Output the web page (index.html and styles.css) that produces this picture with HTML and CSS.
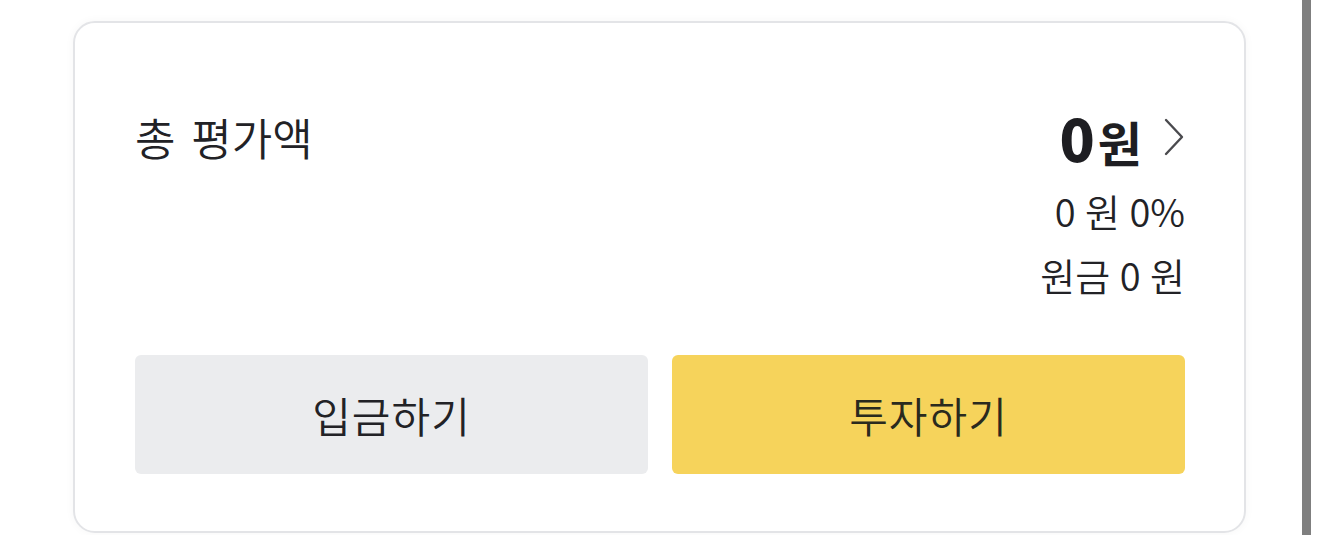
FILE: index.html
```html
<!DOCTYPE html>
<html>
<head>
    <title>총 평가액</title>
    <link rel="stylesheet" href="styles.css">
</head>
<body>
    <div class="page">
        <div class="asset-card">
            <div class="summary">
                <div class="summary-title">총 평가액</div>
                <div class="summary-values">
                    <a class="total" href="#">
                        <span class="total-amount"><b>0</b>원</span>
                        <svg class="chevron" width="22" height="40" viewBox="0 0 22 40">
                            <path d="M3 3 L19 20 L3 37" fill="none" stroke="#4a4a4e" stroke-width="2.4" stroke-linecap="round" stroke-linejoin="round"/>
                        </svg>
                    </a>
                    <div class="profit">0 원 0%</div>
                    <div class="principal">원금 0 원</div>
                </div>
            </div>
            <div class="actions">
                <button class="btn btn-deposit">입금하기</button>
                <button class="btn btn-invest">투자하기</button>
            </div>
        </div>
    </div>
    <div class="scrollbar"></div>
</body>
</html>
```

FILE: styles.css
```css
/* asset summary card */
body {
    margin: 0;
    height: 535px;
    display: flex;
    background-color: white;
    font-family: "Noto Sans CJK KR", "Noto Sans", sans-serif;
    font-weight: 350;
    color: #222226;
    overflow: hidden;
}
.page {
    width: 1302px;
    padding-top: 21px;
}
.scrollbar {
    width: 9px;
    background-color: #7f7f7f;
}
.asset-card {
    box-sizing: border-box;
    margin-left: 73px;
    width: 1173px;
    height: 512px;
    padding: 84px 59px 0 60px;
    border: 2px solid #e3e4e7;
    border-radius: 22px;
    box-shadow: 0 0 10px rgba(0, 0, 0, 0.04);
}
.summary {
    display: flex;
    justify-content: space-between;
    align-items: flex-start;
}
.summary-title {
    font-size: 44px;
    line-height: 60px;
    word-spacing: 6px;
}
.summary-values {
    display: flex;
    flex-direction: column;
    align-items: flex-end;
}
.total {
    display: flex;
    align-items: center;
    height: 60px;
    color: #1e1e22;
    text-decoration: none;
}
.total-amount {
    font-size: 48px;
    font-weight: bold;
    letter-spacing: -1px;
}
.total-amount b {
    font-size: 58px;
    margin-right: 4px;
}
.chevron {
    margin-left: 22px;
}
.profit, .principal {
    font-size: 38px;
    line-height: 48px;
    word-spacing: 1px;
}
.profit {
    margin-top: 20px;
}
.principal {
    margin-top: 16px;
}
.actions {
    display: flex;
    gap: 24px;
    margin-top: 56px;
}
.btn {
    flex: 1;
    height: 119px;
    border: none;
    border-radius: 6px;
    font-family: inherit;
    font-weight: 350;
    font-size: 42px;
    letter-spacing: 1px;
    color: #222226;
    cursor: pointer;
}
.btn-deposit {
    background-color: #ebecee;
}
.btn-invest {
    background-color: #f6d35b;
    color: #2a2a1e;
}
```
